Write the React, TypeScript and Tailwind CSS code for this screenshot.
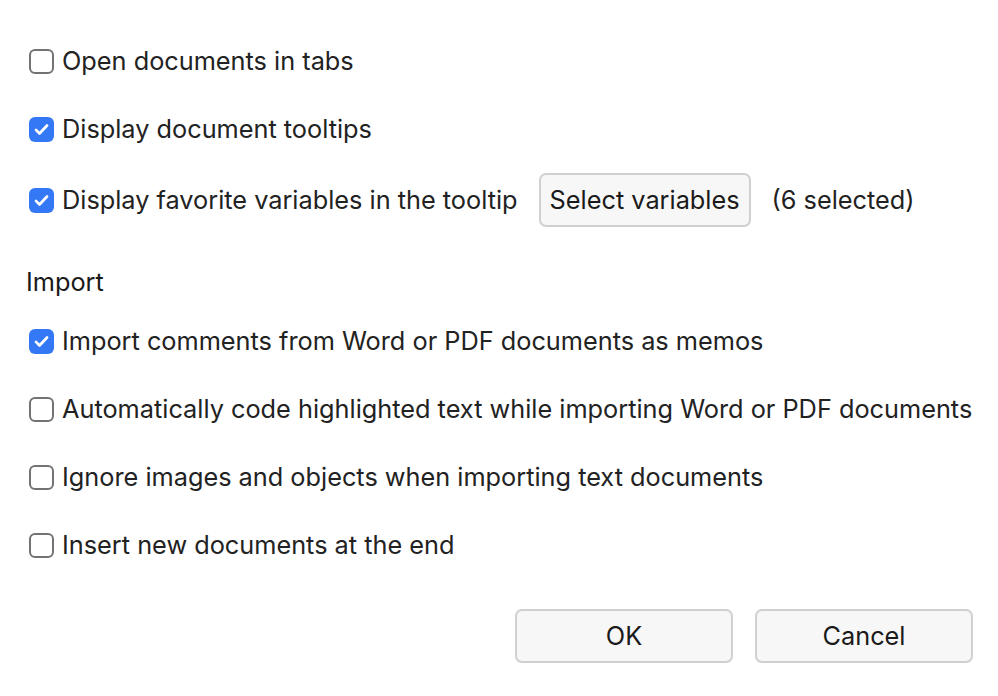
import React, { useState } from 'react';

const font = { fontFamily: 'Inter, "Noto Sans", sans-serif' };

const Check = ({ checked, onChange }: { checked: boolean; onChange: () => void }) => (
  <button
    type="button"
    onClick={onChange}
    className={
      checked
        ? 'flex h-[25px] w-[25px] shrink-0 items-center justify-center rounded-[6px] bg-[#3478f6]'
        : 'flex h-[25px] w-[25px] shrink-0 items-center justify-center rounded-[6px] border-2 border-[#737373] bg-white'
    }
  >
    {checked && (
      <svg viewBox="0 0 24 24" className="h-[19px] w-[19px]" fill="none" stroke="white" strokeWidth={3.4} strokeLinecap="round" strokeLinejoin="round">
        <path d="M5 12.5l4.5 4.5L19 7" />
      </svg>
    )}
  </button>
);

const Option = ({
  label,
  checked,
  onChange,
  children,
  className = 'h-[40px]',
}: {
  label: string;
  checked: boolean;
  onChange: () => void;
  children?: React.ReactNode;
  className?: string;
}) => (
  <div className={`flex items-center pl-[29px] ${className}`}>
    <Check checked={checked} onChange={onChange} />
    <span className="ml-[8px] whitespace-nowrap text-[25.3px] leading-none text-[#222]">{label}</span>
    {children}
  </div>
);

const App = () => {
  const [opts, setOpts] = useState({
    tabs: false,
    tooltips: true,
    favorites: true,
    comments: true,
    autocode: false,
    images: false,
    atEnd: false,
  });

  const toggle = (k: keyof typeof opts) => setOpts((o) => ({ ...o, [k]: !o[k] }));

  return (
    <div className="h-[696px] w-[998px] overflow-hidden bg-white" style={font}>
      <div className="flex flex-col pt-[41px]">
        <Option label="Open documents in tabs" checked={opts.tabs} onChange={() => toggle('tabs')} />
        <div className="mt-[28px]">
          <Option label="Display document tooltips" checked={opts.tooltips} onChange={() => toggle('tooltips')} />
        </div>
        <div className="mt-[24px]">
          <Option
            label="Display favorite variables in the tooltip"
            checked={opts.favorites}
            onChange={() => toggle('favorites')}
            className="h-[54px]"
          >
            <button
              type="button"
              className="ml-[21px] h-[54px] w-[212px] rounded-[7px] border-2 border-[#d0d0d0] bg-[#f7f7f7] text-[25.3px] text-[#1a1a1a]"
            >
              Select variables
            </button>
            <span className="ml-[21px] whitespace-nowrap text-[25.3px] leading-none text-[#222]">(6 selected)</span>
          </Option>
        </div>

        <div className="mt-[35px] flex h-[40px] items-center pl-[26px] text-[25.3px] leading-none text-[#1a1a1a]">Import</div>

        <div className="mt-[19px] flex flex-col gap-[28px]">
          <Option label="Import comments from Word or PDF documents as memos" checked={opts.comments} onChange={() => toggle('comments')} />
          <Option label="Automatically code highlighted text while importing Word or PDF documents" checked={opts.autocode} onChange={() => toggle('autocode')} />
          <Option label="Ignore images and objects when importing text documents" checked={opts.images} onChange={() => toggle('images')} />
          <Option label="Insert new documents at the end" checked={opts.atEnd} onChange={() => toggle('atEnd')} />
        </div>

        <div className="mt-[44px] flex justify-end gap-[22px] pr-[25px]">
          <button type="button" className="h-[54px] w-[218px] rounded-[7px] border-2 border-[#d0d0d0] bg-[#f7f7f7] text-[25.3px] text-[#1a1a1a]">
            OK
          </button>
          <button type="button" className="h-[54px] w-[218px] rounded-[7px] border-2 border-[#d0d0d0] bg-[#f7f7f7] text-[25.3px] text-[#1a1a1a]">
            Cancel
          </button>
        </div>
      </div>
    </div>
  );
};

export default App;
